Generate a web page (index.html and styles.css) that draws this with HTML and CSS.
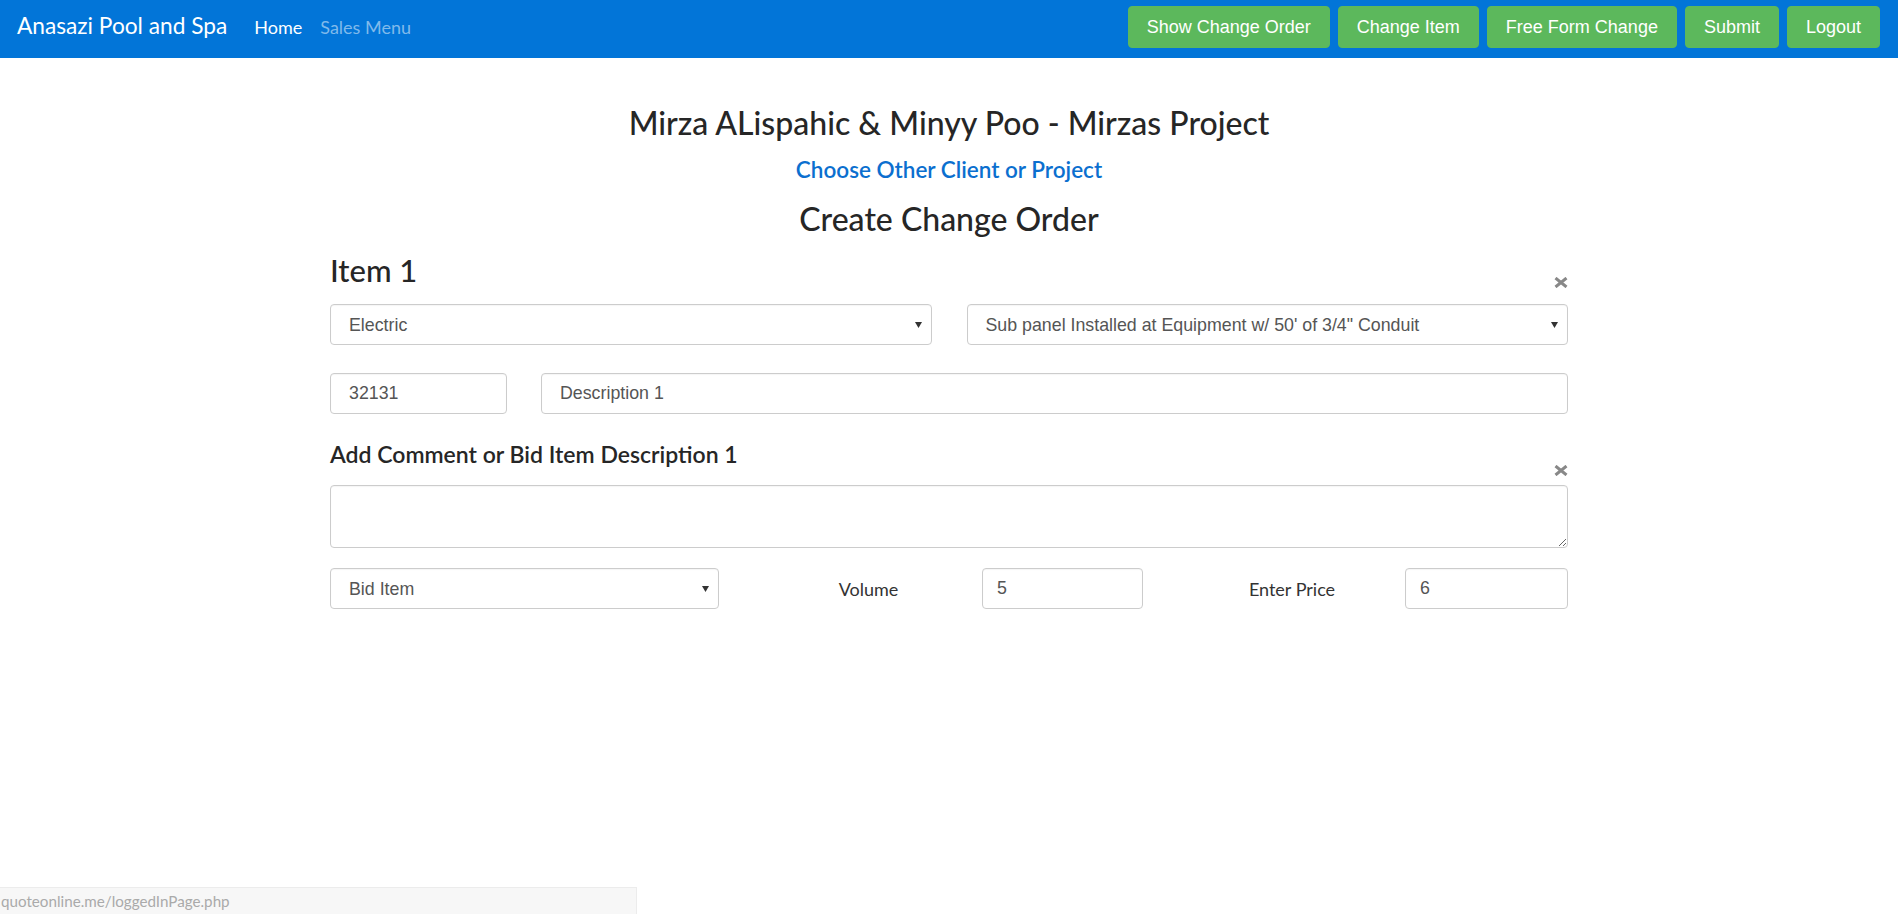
FILE: index.html
```html
<!DOCTYPE html>
<html lang="en">
<head>
<meta charset="utf-8">
<title>Create Change Order</title>
<link rel="stylesheet" href="styles.css">
</head>
<body>
<nav class="navbar">
  <div class="nav-left">
    <a class="brand" href="#">Anasazi Pool and Spa</a>
    <a class="nav-link active" href="#">Home</a>
    <a class="nav-link" href="#">Sales Menu</a>
  </div>
  <div class="nav-right">
    <button class="btn">Show Change Order</button>
    <button class="btn">Change Item</button>
    <button class="btn">Free Form Change</button>
    <button class="btn">Submit</button>
    <button class="btn">Logout</button>
  </div>
</nav>

<main class="container">
  <h2 class="title">Mirza ALispahic &amp; Minyy Poo - Mirzas Project</h2>
  <a class="choose" href="#">Choose Other Client or Project</a>
  <h2 class="title create">Create Change Order</h2>

  <div class="item-head">
    <h3 class="item-title">Item 1</h3>
    <button class="close" aria-label="Close"><svg width="14" height="11" viewBox="0 0 14 11"><path d="M1.5 1 L12.5 10 M12.5 1 L1.5 10" stroke="#888" stroke-width="3" stroke-linecap="butt"/></svg></button>
  </div>

  <div class="row two">
    <select class="control"><option>Electric</option></select>
    <select class="control"><option>Sub panel Installed at Equipment w/ 50' of 3/4" Conduit</option></select>
  </div>

  <div class="row code">
    <input class="control" type="text" value="32131">
    <input class="control" type="text" value="Description 1">
  </div>

  <h4 class="comment-title">Add Comment or Bid Item Description 1</h4>
  <div class="close-row">
    <button class="close" aria-label="Close"><svg width="14" height="11" viewBox="0 0 14 11"><path d="M1.5 1 L12.5 10 M12.5 1 L1.5 10" stroke="#888" stroke-width="3" stroke-linecap="butt"/></svg></button>
  </div>
  <textarea class="control comment"></textarea>

  <div class="row bid">
    <select class="control"><option>Bid Item</option></select>
    <label class="lbl">Volume</label>
    <input class="control small" type="text" value="5">
    <label class="lbl">Enter Price</label>
    <input class="control small" type="text" value="6">
  </div>
</main>

<div class="statusbar">quoteonline.me/loggedInPage.php</div>
</body>
</html>
```

FILE: styles.css
```css
* { box-sizing: border-box; }

html, body {
  margin: 0;
  padding: 0;
  background: #fff;
  font-family: Lato, "Open Sans", sans-serif;
  color: #292b2c;
}

.navbar {
  height: 58px;
  background: #0275d8;
  display: flex;
  align-items: flex-start;
  justify-content: space-between;
  padding: 0 18px 0 17px;
}

.nav-left {
  display: flex;
  align-items: baseline;
  padding-top: 9px;
}

.brand {
  color: #fff;
  text-decoration: none;
  font-size: 22.7px;
  line-height: 34px;
  margin-right: 27px;
}

.nav-link {
  color: #80baeb;
  text-decoration: none;
  font-size: 18px;
  margin-right: 18px;
}

.nav-link.active { color: #fff; }

.nav-right {
  display: flex;
  gap: 8px;
  padding-top: 6px;
}

.btn {
  background: #5cb85c;
  color: #fff;
  border: 1px solid #5cb85c;
  border-radius: 4px;
  font-family: "Liberation Sans", Arial, sans-serif;
  font-size: 18px;
  line-height: 26px;
  padding: 7px 18px;
  height: 42px;
  cursor: pointer;
}

.container {
  width: 1238px;
  margin: 0 auto;
  display: flex;
  flex-direction: column;
}

.title {
  margin: 46px 0 0;
  font-size: 32px;
  line-height: 38px;
  font-weight: 500;
  text-align: center;
  color: #262626;
}

.choose {
  display: block;
  margin-top: 15px;
  text-align: center;
  color: #0b6fcf;
  text-decoration: none;
  font-size: 22.5px;
  font-weight: 600;
  line-height: 26px;
}

.title.create { margin-top: 17px; }

.item-head {
  display: flex;
  justify-content: space-between;
  align-items: flex-end;
  margin-top: 14px;
}

.item-title {
  margin: 0;
  font-size: 31px;
  line-height: 36px;
  font-weight: 500;
  color: #262626;
}

.close {
  background: none;
  border: 0;
  padding: 0;
  margin: 0;
  display: block;
  height: 11px;
  cursor: pointer;
}

.close svg { display: block; }

.row { display: grid; }

.row.two {
  grid-template-columns: 1fr 1fr;
  column-gap: 35px;
  margin-top: 16px;
}

.row.code {
  grid-template-columns: 177px 1fr;
  column-gap: 34px;
  margin-top: 28px;
}

.control {
  display: block;
  width: 100%;
  height: 41px;
  border: 1px solid #ccc;
  border-radius: 4px;
  background: #fff;
  font-family: "Liberation Sans", Arial, sans-serif;
  font-size: 17.8px;
  color: #555;
  padding: 0 12px 0 18px;
  margin: 0;
  box-shadow: inset 0 1px 1px rgba(0,0,0,.04);
}

select.control {
  appearance: none;
  -webkit-appearance: none;
  background: #fff url("data:image/svg+xml,%3Csvg xmlns='http://www.w3.org/2000/svg' width='7' height='6'%3E%3Cpath d='M0 0H7L3.5 6Z' fill='%23333'/%3E%3C/svg%3E") no-repeat right 9px center;
  padding-right: 24px;
}

input.control.small { padding-left: 14px; }

.comment-title {
  margin: 26px 0 0;
  font-size: 23px;
  line-height: 28px;
  font-weight: 600;
  color: #262626;
}

.close-row {
  display: flex;
  justify-content: flex-end;
  align-items: flex-start;
  height: 20px;
  margin-top: -3px;
}

.comment {
  height: 63px;
  resize: vertical;
  padding: 6px 12px;
}

.row.bid {
  grid-template-columns: 389px 263px 161px 262px 163px;
  align-items: center;
  margin-top: 20px;
}

.lbl {
  padding-left: 36px;
  text-align: center;
  font-size: 18px;
  color: #333;
}

.statusbar {
  position: fixed;
  left: 0;
  bottom: 0;
  width: 637px;
  height: 27px;
  background: #f7f7f7;
  border-top: 1px solid #ececec;
  border-right: 1px solid #ececec;
  color: #aaa;
  font-size: 15.2px;
  line-height: 26px;
  padding-left: 1px;
}
```
